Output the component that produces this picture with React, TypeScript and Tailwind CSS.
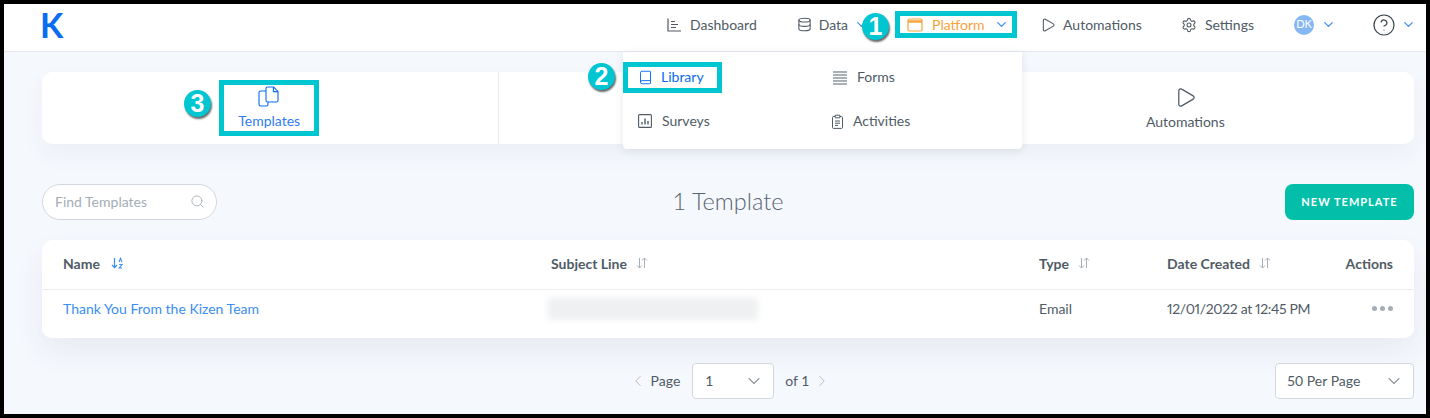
import type React from 'react';
import { ChevronDown, ChevronLeft, ChevronRight, CircleHelp, Database, Play, Search, Settings, Book } from 'lucide-react';

const gray = 'text-[#4f5b65]';

function DashboardIcon() {
  return (
    <svg width="16" height="16" viewBox="0 0 16 16" fill="none" stroke="currentColor" strokeWidth="1.2" className="mr-[8px]">
      <path d="M2 1.5v12.5h13M5 4.5h4M5 7.5h7M5 10.5h5" />
    </svg>
  );
}

function WindowIcon() {
  return (
    <svg width="16" height="14" viewBox="0 0 16 14" fill="none" stroke="currentColor" strokeWidth="1.2">
      <rect x="1" y="1" width="14" height="12" rx="1.5" />
      <path d="M1 3.5h14" strokeWidth="2.4" />
    </svg>
  );
}

function FormsIcon() {
  return (
    <svg width="16" height="14" viewBox="0 0 16 14" stroke="#8f989e" strokeWidth="1.5">
      <path d="M1 1h14M1 4h14M1 7h14M1 10h14M1 13h14" />
    </svg>
  );
}

function SurveyIcon() {
  return (
    <svg width="14" height="14" viewBox="0 0 14 14" fill="none" stroke="currentColor" strokeWidth="1.1">
      <rect x="0.6" y="0.6" width="12.8" height="12.8" rx="1" />
      <path d="M4 10.5V8M7 10.5V4.5M10 10.5V7" strokeWidth="1.4" />
    </svg>
  );
}

function ClipboardIcon() {
  return (
    <svg width="11" height="15" viewBox="0 0 11 15" fill="none" stroke="currentColor" strokeWidth="1">
      <path d="M3 2.5H1.5a1 1 0 0 0-1 1v9.9a1 1 0 0 0 1 1h8a1 1 0 0 0 1-1V3.5a1 1 0 0 0-1-1H8" />
      <path d="M3.2 1.2h4.6v2.6H3.2zM3 7h5M3 9.2h5M3 11.4h3" />
    </svg>
  );
}

function TemplatesIcon() {
  return (
    <svg width="21" height="21" viewBox="0 0 21 21" fill="none" stroke="#0a6cf0" strokeWidth="1.1">
      <path d="M8 5H2.6A1.6 1.6 0 0 0 1 6.6v11.8A1.6 1.6 0 0 0 2.6 20h5.8A1.6 1.6 0 0 0 10 18.4V16" />
      <path d="M9.6 1h6l4.4 4.4v9A1.6 1.6 0 0 1 18.4 16H9.6A1.6 1.6 0 0 1 8 14.4V2.6A1.6 1.6 0 0 1 9.6 1Z" />
      <path d="M15.4 1v4.6H20" />
    </svg>
  );
}

function SortIcon({ active }: { active?: boolean }) {
  if (active) {
    return (
      <svg width="12" height="12" viewBox="0 0 12 12" fill="none" stroke="#3b8ef0" strokeWidth="1.2" className="ml-[11px]">
        <path d="M3.5 1v9.5M1 8l2.5 2.7L6 8" />
        <path d="M8 5l1.5-3.6L11 5M8.2 7.5H11L8.2 11H11" strokeWidth="1.1" />
      </svg>
    );
  }
  return (
    <svg width="12" height="12" viewBox="0 0 12 12" fill="none" stroke="#a7b0b8" strokeWidth="1" className="ml-[9px]">
      <path d="M3.5 1v10M1 8.5 3.5 11 6 8.5M8.5 11V1M6 3.5 8.5 1 11 3.5" />
    </svg>
  );
}

function NavItem({ icon, label, className }: { icon: React.ReactNode; label: string; className: string }) {
  return (
    <div className={`flex items-center ${gray} ${className}`}>
      {icon}
      <span>{label}</span>
    </div>
  );
}

function Badge({ n, className }: { n: number; className: string }) {
  return (
    <div
      className={`absolute z-20 flex h-[27px] w-[27px] items-center justify-center rounded-full bg-[#00c6d2] font-['Liberation_Sans',sans-serif] text-[25px] font-bold text-white shadow-[1px_2px_2px_rgba(0,0,0,0.6)] ${className}`}
    >
      {n}
    </div>
  );
}

function Header() {
  return (
    <header className="relative flex h-[48px] shrink-0 items-center border-b border-[#e3e7ee] bg-white pb-[6px] pl-[36px]">
      <span className="text-[34px] font-bold leading-none text-[#0a6cf0]">K</span>
      <nav className="ml-auto flex items-center">
        <NavItem icon={<DashboardIcon />} label="Dashboard" className="" />
        <div className={`ml-[40px] flex items-center ${gray}`}>
          <Database size={15} strokeWidth={1.7} className="mr-[7px]" />
          <span>Data</span>
          <ChevronDown size={15} strokeWidth={2} className="ml-[6px] text-[#3b8ef0]" />
        </div>
        <div className="ml-[26px] flex h-[27px] w-[122px] items-center border-[5px] border-[#00c6d2] pl-[7px] text-[#f7a23b]">
          <WindowIcon />
          <span className="ml-[9px]">Platform</span>
          <ChevronDown size={15} strokeWidth={2} className="ml-[9px] text-[#3b8ef0]" />
        </div>
        <NavItem
          icon={<Play size={16} strokeWidth={1.6} className="mr-[7px]" />}
          label="Automations"
          className="ml-[23px]"
        />
        <NavItem
          icon={<Settings size={16} strokeWidth={1.6} className="mr-[8px]" />}
          label="Settings"
          className="ml-[39px]"
        />
        <div className="ml-[40px] flex h-[20px] w-[20px] items-center justify-center rounded-full bg-[#85b7f3] text-[11px] text-white">
          DK
        </div>
        <ChevronDown size={15} strokeWidth={2} className="ml-[7px] text-[#3b8ef0]" />
        <CircleHelp size={24} strokeWidth={1.2} className="ml-[36px] text-[#3a444d]" />
        <ChevronDown size={15} strokeWidth={2} className="ml-[5px] mr-[10px] text-[#3b8ef0]" />
      </nav>
    </header>
  );
}

function PlatformMenu() {
  return (
    <div className={`absolute left-[619px] top-0 z-10 h-[97px] w-[399px] rounded-b-[4px] bg-white pt-[10px] shadow-[0_2px_8px_rgba(60,70,90,0.12)] ${gray}`}>
      <div className="grid grid-cols-[209px_1fr] grid-rows-[31px_56px]">
        <div className="flex w-[99px] items-center border-[5px] border-[#00c6d2] pl-[10px] text-[#0a6cf0]">
          <Book size={15} strokeWidth={1.5} />
          <span className="mb-[2px] ml-[8px]">Library</span>
        </div>
        <div className="flex items-center">
          <FormsIcon />
          <span className="mb-[2px] ml-[9px]">Forms</span>
        </div>
        <div className="flex items-center pl-[15px]">
          <SurveyIcon />
          <span className="mb-px ml-[10px]">Surveys</span>
        </div>
        <div className="flex items-center">
          <ClipboardIcon />
          <span className="mb-px ml-[10px]">Activities</span>
        </div>
      </div>
    </div>
  );
}

function Tabs() {
  return (
    <div className="grid h-[72px] grid-cols-3 rounded-[10px] bg-white shadow-[0_10px_24px_rgba(60,70,100,0.05)]">
      <div className="flex items-center justify-center border-r border-[#e6e9ee]">
        <div className="ml-[-3px] flex h-[56px] w-[100px] flex-col items-center justify-center border-[5px] border-[#00c6d2] pb-[2px] text-[#2f7df0]">
          <TemplatesIcon />
          <span className="ml-px mt-[6px] leading-[16px]">Templates</span>
        </div>
      </div>
      <div className="border-r border-[#e6e9ee]" />
      <div className={`flex flex-col items-center justify-center pb-px ${gray}`}>
        <Play size={23} strokeWidth={1.3} />
        <span className="mt-[5px] leading-[16px]">Automations</span>
      </div>
    </div>
  );
}

function Toolbar() {
  return (
    <div className="mt-[40px] grid grid-cols-[1fr_auto_1fr] items-center">
      <div className="flex h-[36px] w-[175px] items-center justify-between rounded-full border border-[#d3d8df] bg-white pb-px pl-[12px] pr-[11px] text-[#a4adb5]">
        <span className="mb-px">Find Templates</span>
        <Search size={15} strokeWidth={1.4} />
      </div>
      <div className="mb-px text-[23.5px] font-light leading-none text-[#5a6570]">1 Template</div>
      <button className="ml-auto h-[36px] w-[129px] rounded-[8px] bg-[#03bfa9] text-[11px] font-bold tracking-[1px] text-white">
        NEW TEMPLATE
      </button>
    </div>
  );
}

function TemplateTable() {
  return (
    <div className="mt-[20px] rounded-[10px] bg-white shadow-[0_14px_30px_rgba(60,70,100,0.07)]">
      <div className={`grid h-[50px] grid-cols-[488px_488px_128px_1fr] items-center border-b border-[#eceef1] px-[21px] pb-[3px] font-bold ${gray}`}>
        <div className="flex items-center">Name<SortIcon active /></div>
        <div className="flex items-center">Subject Line<SortIcon /></div>
        <div className="flex items-center">Type<SortIcon /></div>
        <div className="flex items-center justify-between">
          <span className="flex items-center">Date Created<SortIcon /></span>
          <span>Actions</span>
        </div>
      </div>
      <div className={`grid h-[48px] grid-cols-[488px_488px_128px_1fr] items-center px-[21px] pb-[11px] ${gray}`}>
        <div className="text-[#3b8ef0]">Thank You From the Kizen Team</div>
        <div className="ml-[-3px] h-[22px] w-[210px] bg-[#eef0f1] blur-[3px]" />
        <div>Email</div>
        <div className="flex items-center justify-between">
          <span className="tracking-[-0.35px] proportional-nums">12/01/2022 at 12:45 PM</span>
          <span className="flex gap-[3px]">
            <i className="h-[5px] w-[5px] rounded-full bg-[#a5aeb6]" />
            <i className="h-[5px] w-[5px] rounded-full bg-[#a5aeb6]" />
            <i className="h-[5px] w-[5px] rounded-full bg-[#a5aeb6]" />
          </span>
        </div>
      </div>
    </div>
  );
}

function Select({ label, className }: { label: string; className: string }) {
  return (
    <div className={`flex h-[36px] items-center justify-between rounded-[4px] border border-[#d3d8df] bg-white pr-[9px] ${gray} ${className}`}>
      <span className="mb-[2px]">{label}</span>
      <ChevronDown size={20} strokeWidth={1.3} className="text-[#8f989e]" />
    </div>
  );
}

function Pager() {
  return (
    <div className={`mt-[25px] grid grid-cols-[1fr_auto_1fr] items-center ${gray}`}>
      <div />
      <div className="flex items-center pl-[4px]">
        <ChevronLeft size={18} strokeWidth={1.3} className="text-[#b5bcc3]" />
        <span className="mb-[2px] ml-[4px]">Page</span>
        <Select label="1" className="ml-[12px] w-[82px] pl-[12px]" />
        <span className="mb-[2px] ml-[11px]">of 1</span>
        <ChevronRight size={18} strokeWidth={1.3} className="ml-[4px] text-[#b5bcc3]" />
      </div>
      <Select label="50 Per Page" className="ml-auto w-[139px] pl-[11px]" />
    </div>
  );
}

export default function App() {
  return (
    <div className="h-[418px] bg-black p-[4px] font-['Lato',sans-serif] text-[14px]">
      <div className="relative flex h-[410px] flex-col overflow-hidden bg-[#f5f8fd]">
        <Header />
        <main className="relative flex-1 pl-[38px] pr-[12px] pt-[20px]">
          <PlatformMenu />
          <Tabs />
          <Toolbar />
          <TemplateTable />
          <Pager />
        </main>
        <Badge n={1} className="left-[858px] top-[9px]" />
        <Badge n={2} className="left-[584px] top-[59px]" />
        <Badge n={3} className="left-[180px] top-[86px]" />
      </div>
    </div>
  );
}
